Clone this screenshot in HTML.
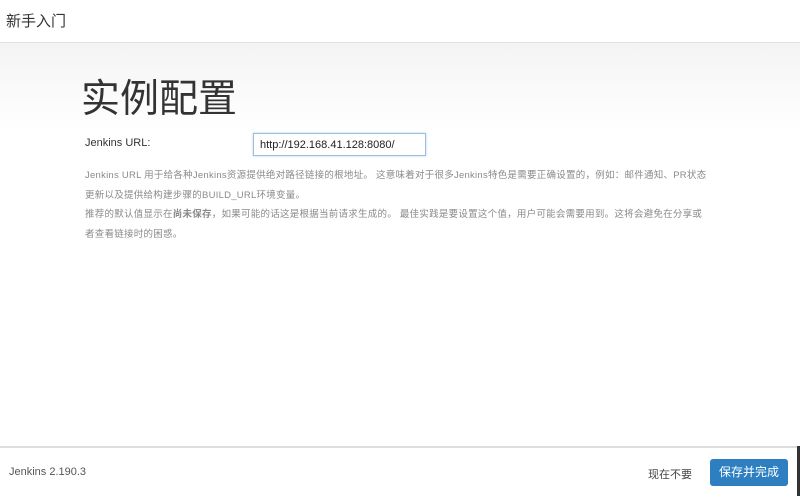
<!DOCTYPE html>
<html><head><meta charset="utf-8"><style>
body{margin:0;width:800px;height:496px;overflow:hidden;font-family:"Liberation Sans","Noto Sans CJK SC",sans-serif;background:#fff;position:relative}
.hd{position:absolute;left:0;top:0;width:800px;height:42px;border-bottom:1px solid #e2e2e2;background:#fff}
.hd span{position:absolute;left:6px;top:10px;font-size:15px;color:#333}
.main{position:absolute;top:43px;left:0;width:800px;height:403px;background:linear-gradient(#f4f4f4,#fff 90px)}
h1{position:absolute;left:81px;top:75px;margin:0;font-size:39px;font-weight:normal;color:#333;line-height:50px}
.lbl{position:absolute;left:85px;top:137px;font-size:11px;color:#333}
.inp{position:absolute;left:253px;top:133px;width:173px;height:23px;border:1px solid #9cbfe0;box-shadow:0 0 2px #a9cbea;background:#fff;font-size:11px;color:#222;line-height:22px;padding-left:6px;box-sizing:border-box}
.help{position:absolute;left:85px;top:166px;width:640px;font-size:9.5px;letter-spacing:0.25px;color:#8a8a8a;line-height:19.5px}
.ft{position:absolute;left:0;top:446px;width:800px;height:50px;border-top:2px solid #ddd;background:#fff}
.ft .v{position:absolute;left:9px;top:18px;font-size:11px;color:#555}
.ft .no{position:absolute;left:648px;top:18px;font-size:11px;color:#444}
.ft .btn{position:absolute;left:710px;top:11px;width:78px;height:27px;background:#2d7fc1;border-radius:3px;color:#fff;font-size:12px;text-align:center;line-height:27px}
.rl{position:absolute;right:0;top:446px;width:3px;height:50px;background:#333}
</style></head><body>
<div class="hd"><span>新手入门</span></div>
<div class="main"></div>
<h1>实例配置</h1>
<div class="lbl">Jenkins URL:</div>
<div class="inp">http://192.168.41.128:8080/</div>
<div class="help">Jenkins URL 用于给各种Jenkins资源提供绝对路径链接的根地址。 这意味着对于很多Jenkins特色是需要正确设置的，例如：邮件通知、PR状态<br>更新以及提供给构建步骤的BUILD_URL环境变量。<br>推荐的默认值显示在<b>尚未保存</b>，如果可能的话这是根据当前请求生成的。 最佳实践是要设置这个值，用户可能会需要用到。这将会避免在分享或<br>者查看链接时的困惑。</div>
<div class="ft"><span class="v">Jenkins 2.190.3</span><span class="no">现在不要</span><div class="btn">保存并完成</div></div>
<div class="rl"></div>
</body></html>
